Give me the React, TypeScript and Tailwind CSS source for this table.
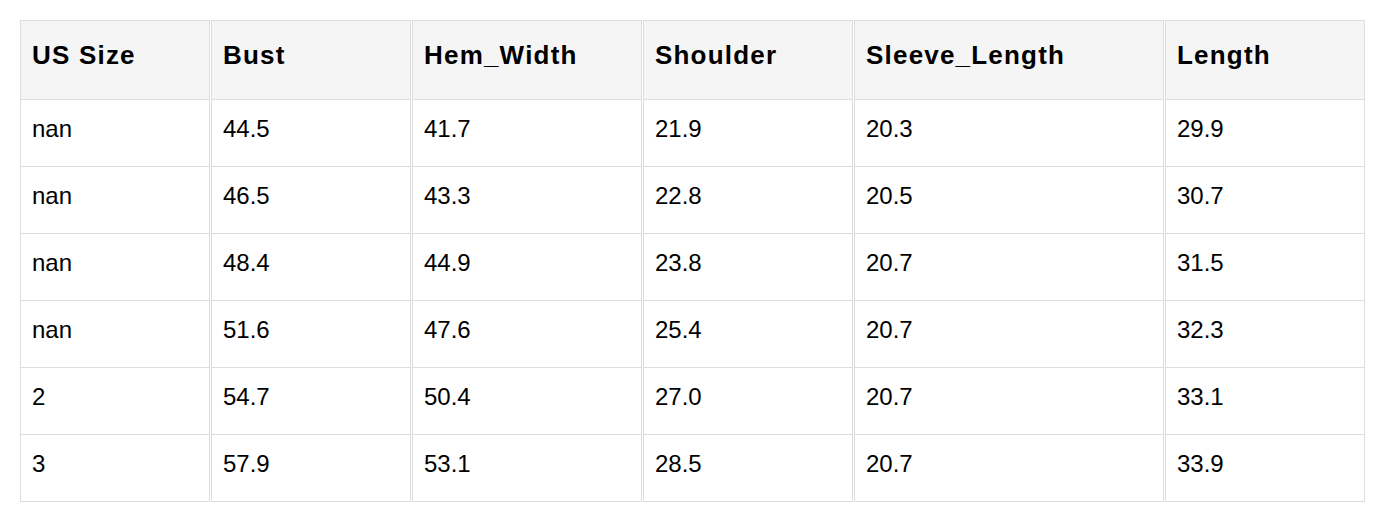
import React from "react";

const widths = ["w-[190px]", "w-[200px]", "w-[230px]", "w-[210px]", "w-[310px]", "w-[200px]"];
const headers = ["US Size", "Bust", "Hem_Width", "Shoulder", "Sleeve_Length", "Length"];
const rows = [
  ["nan", "44.5", "41.7", "21.9", "20.3", "29.9"],
  ["nan", "46.5", "43.3", "22.8", "20.5", "30.7"],
  ["nan", "48.4", "44.9", "23.8", "20.7", "31.5"],
  ["nan", "51.6", "47.6", "25.4", "20.7", "32.3"],
  ["2", "54.7", "50.4", "27.0", "20.7", "33.1"],
  ["3", "57.9", "53.1", "28.5", "20.7", "33.9"],
];

export default function App() {
  return (
    <div className="w-[1384px] h-[521px] bg-white text-black" style={{ fontFamily: '"Liberation Sans", Arial, sans-serif' }}>
      <div className="pt-5 pl-5 flex flex-col">
        <div className="flex gap-px">
          {headers.map((h, i) => (
            <div
              key={i}
              className={`${widths[i]} h-[79px] shrink-0 border-x border-t border-[#dddddd] bg-[#f5f5f5] pl-[11px] pt-[20px] text-[26px] leading-[28px] font-bold tracking-[1.2px]`}
            >
              {h}
            </div>
          ))}
        </div>
        {rows.map((r, ri) => (
          <div key={ri} className="flex gap-px">
            {r.map((c, ci) => (
              <div
                key={ci}
                className={`${widths[ci]} ${ri === rows.length - 1 ? "h-[68px] border-b" : "h-[67px]"} shrink-0 border-x border-t border-[#dddddd] pl-[11px] pt-[15px] text-[24px] leading-[28px]`}
              >
                {c}
              </div>
            ))}
          </div>
        ))}
      </div>
    </div>
  );
}
